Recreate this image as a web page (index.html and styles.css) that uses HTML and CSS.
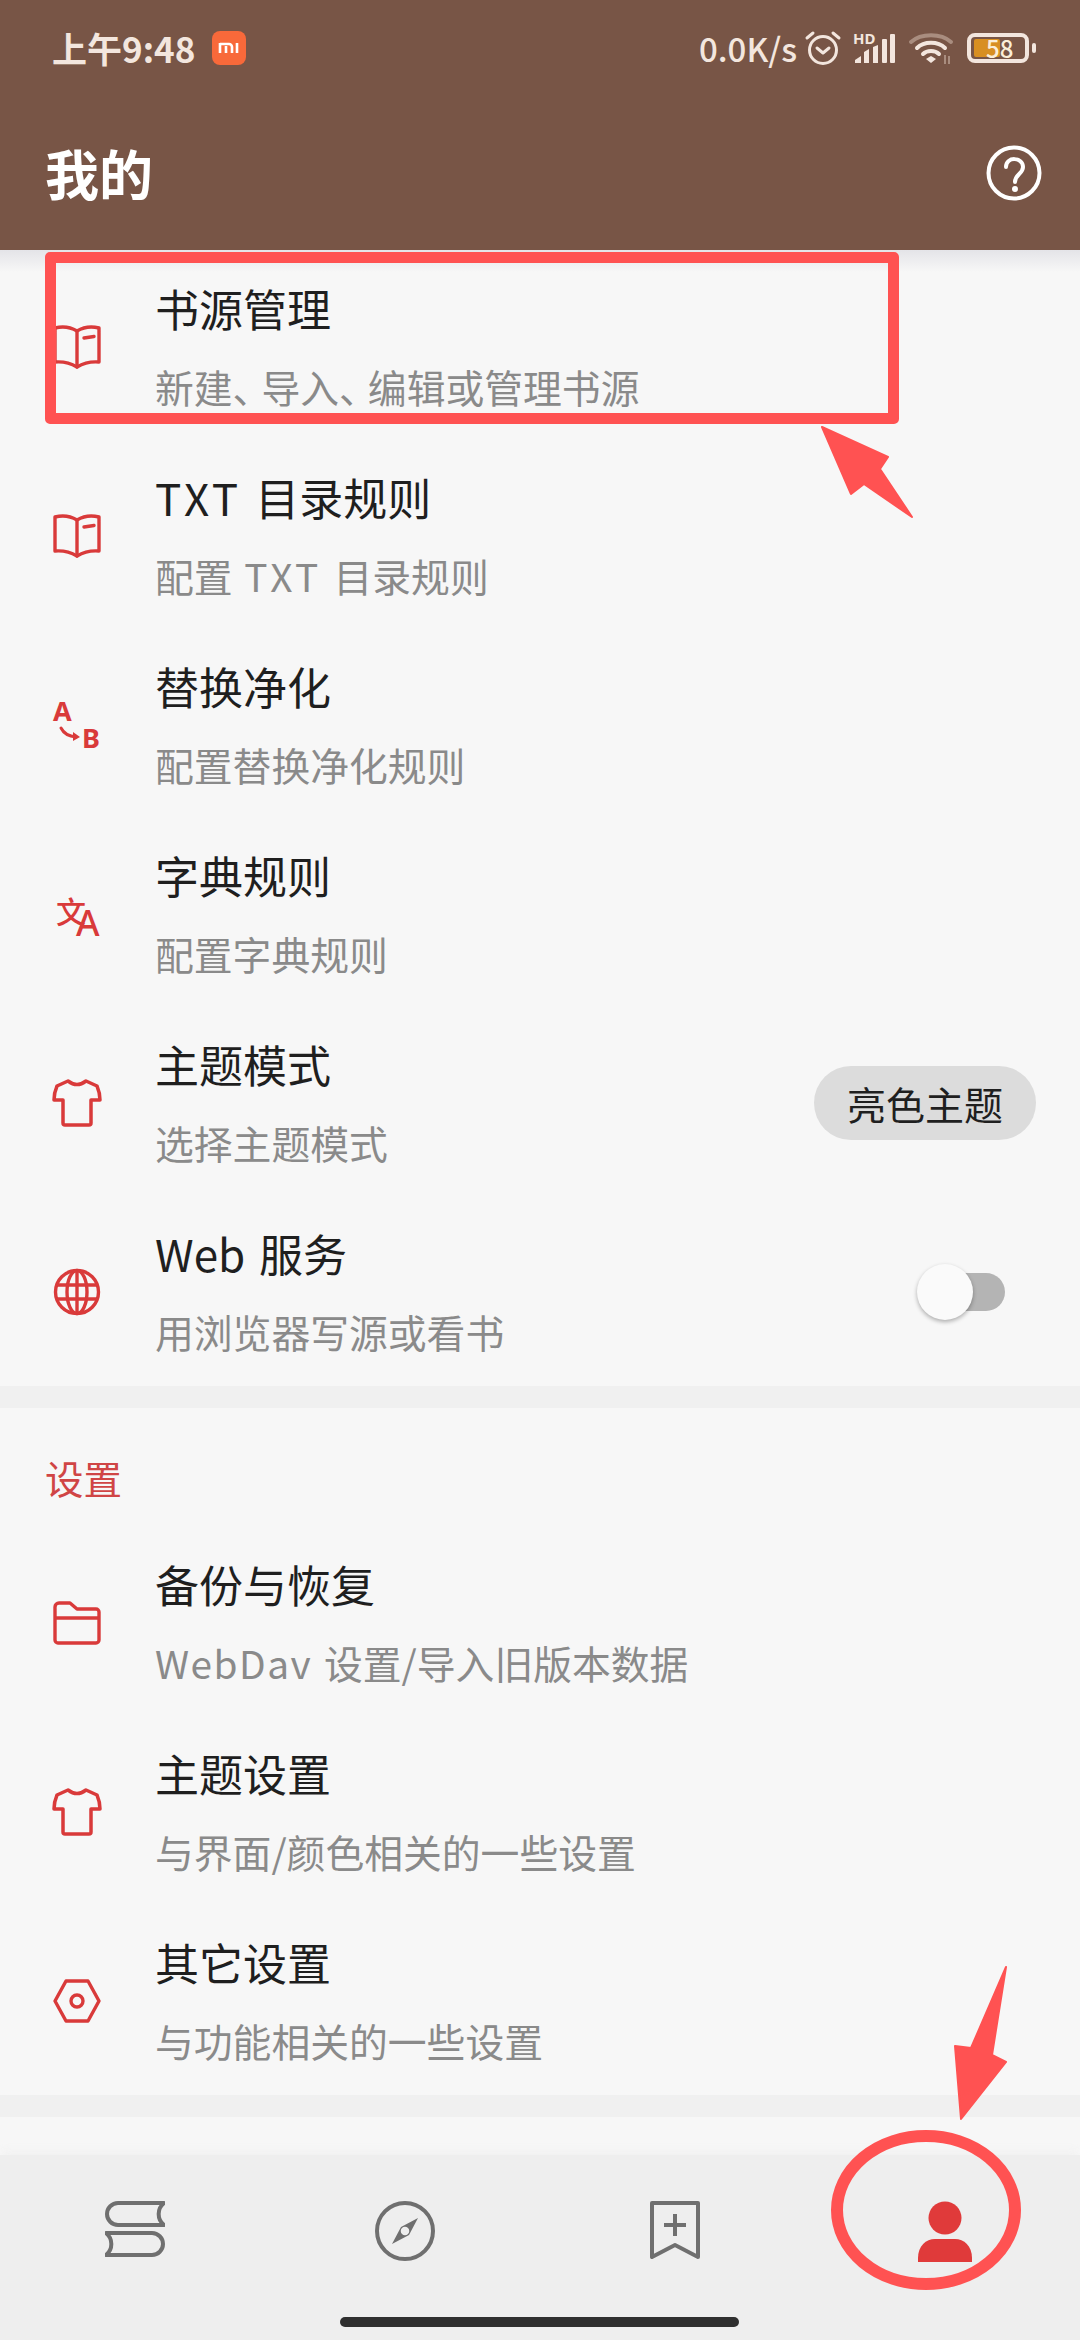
FILE: index.html
```html
<!DOCTYPE html>
<html lang="zh-CN">
<head>
<meta charset="utf-8">
<link rel="stylesheet" href="styles.css">
</head>
<body>
<div class="page">
  <header class="appbar">
    <div class="status">
      <div class="status-left">
        <span class="clock">上午9:48</span>
        <span class="mi">
          <svg viewBox="0 0 34 34" width="34" height="34"><path d="M8 13h9a3 3 0 0 1 3 3v6M8 12v10M14 15v7M25 12v10" fill="none" stroke="#fff" stroke-width="2.600"/></svg>
        </span>
      </div>
      <div class="status-right">
        <span class="speed">0.0K/s</span>
        <svg viewBox="0 0 36 36" width="36" height="36"><g fill="none" stroke="#f3e6de" stroke-width="3" stroke-linecap="round" stroke-linejoin="round"><circle cx="18" cy="20" r="13.500"/><path d="M12 18l6 5 6-5M2 8l6-5M34 8l-6-5"/></g></svg>
        <svg viewBox="0 0 44 32" width="44" height="32"><text x="0" y="12" class="hd">HD</text><g fill="#f3e6de"><path d="M2 31v-3l6-4v7zM11 31V20l5-3v14zM20 31V15l5-2v18z"/><rect x="29" y="7" width="5" height="24" rx="1"/><rect x="37" y="2" width="5" height="29" rx="1"/></g></svg>
        <svg viewBox="0 0 44 34" width="44" height="34"><g fill="none" stroke-linecap="round" stroke-width="4"><path d="M2 11C12 2 32 2 42 11" stroke="#a98d7f"/><path d="M8 17C15 10 29 10 36 17" stroke="#f3e6de"/><path d="M14 23C18 19 26 19 30 23" stroke="#f3e6de"/></g><path d="M17 28l5-3 5 3-5 4z" fill="#f3e6de"/><path d="M36 33V24M40 33V25" stroke="#a98d7f" stroke-width="2" fill="none"/></svg>
        <span class="battery"><span class="battery-fill"></span><span class="battery-num">58</span></span>
      </div>
    </div>
    <div class="toolbar">
      <h1 class="title">我的</h1>
      <svg viewBox="0 0 56 56" width="56" height="56"><circle cx="28" cy="28" r="25.500" fill="none" stroke="#fff" stroke-width="4"/><path d="M20 22c0-11 17-10 17 0 0 7-8 7-8 15" fill="none" stroke="#fff" stroke-width="4" stroke-linecap="round"/><circle cx="29" cy="44" r="3" fill="#fff"/></svg>
    </div>
  </header>

  <main class="content">
    <section class="group">
      <div class="row">
        <svg class="ico" viewBox="0 0 48 48"><use href="#i-book"/></svg>
        <div class="texts"><div class="t">书源管理</div><div class="s">新建<span class="p">、</span>导入<span class="p">、</span>编辑或管理书源</div></div>
      </div>
      <div class="row">
        <svg class="ico" viewBox="0 0 48 48"><use href="#i-book"/></svg>
        <div class="texts"><div class="t"><span class="lat">TXT</span> 目录规则</div><div class="s">配置 <span class="lat">TXT</span> 目录规则</div></div>
      </div>
      <div class="row">
        <svg class="ico" viewBox="0 0 48 48"><text x="0" y="20" class="ab">A<tspan x="29" y="47">B</tspan></text><path d="M8 27Q12 35 23 36" fill="none" stroke="#d93a3a" stroke-width="3" stroke-linecap="round"/><path d="M20 31l7 5-7 4z" fill="#d93a3a"/></svg>
        <div class="texts"><div class="t">替换净化</div><div class="s">配置替换净化规则</div></div>
      </div>
      <div class="row">
        <svg class="ico" viewBox="0 0 48 48"><text x="3" y="33" class="tr1">文<tspan x="23" y="46" class="tr2">A</tspan></text></svg>
        <div class="texts"><div class="t">字典规则</div><div class="s">配置字典规则</div></div>
      </div>
      <div class="row">
        <svg class="ico" viewBox="0 0 48 48"><use href="#i-shirt"/></svg>
        <div class="texts"><div class="t">主题模式</div><div class="s">选择主题模式</div></div>
        <div class="chip">亮色主题</div>
      </div>
      <div class="row">
        <svg class="ico" viewBox="0 0 48 48"><g fill="none" stroke="#d93a3a" stroke-width="3.400"><circle cx="24" cy="24" r="21.500"/><ellipse cx="24" cy="24" rx="10" ry="21.500"/><path d="M3 17h42M3 31h42M24 3v42"/></g></svg>
        <div class="texts"><div class="t">Web 服务</div><div class="s">用浏览器写源或看书</div></div>
        <div class="switch"><span class="thumb"></span></div>
      </div>
    </section>
    <div class="divider"></div>
    <div class="section-head">设置</div>
    <section class="group">
      <div class="row">
        <svg class="ico" viewBox="0 0 48 48"><g fill="none" stroke="#d93a3a" stroke-width="3.400" stroke-linejoin="round"><path d="M2 8a4 4 0 0 1 4-4h11l7 6h19a3 3 0 0 1 3 3v28a3 3 0 0 1-3 3H5a3 3 0 0 1-3-3z"/><path d="M2 19h44"/></g></svg>
        <div class="texts"><div class="t">备份与恢复</div><div class="s"><span class="lat-s">WebDav</span> 设置/导入旧版本数据</div></div>
      </div>
      <div class="row">
        <svg class="ico" viewBox="0 0 48 48"><use href="#i-shirt"/></svg>
        <div class="texts"><div class="t">主题设置</div><div class="s">与界面/颜色相关的一些设置</div></div>
      </div>
      <div class="row">
        <svg class="ico" viewBox="0 0 48 48"><g fill="none" stroke="#d93a3a" stroke-width="3.400" stroke-linejoin="round"><path d="M13 4h22l11 20-11 20H13L2 24z"/><circle cx="24" cy="24" r="6"/></g></svg>
        <div class="texts"><div class="t">其它设置</div><div class="s">与功能相关的一些设置</div></div>
      </div>
    </section>
    <div class="divider"></div>
  </main>

  <nav class="tabs">
    <div class="tab">
      <svg viewBox="0 0 60 56" width="60" height="56"><g fill="none" stroke="#6f6f6f" stroke-width="4" stroke-linejoin="round"><path d="M59 2H13a11 11 0 0 0 0 22h46a14 14 0 0 1 0-22z"/><path d="M1 32h46a11 11 0 0 1 0 22H1a14 14 0 0 0 0-22z"/></g></svg>
    </div>
    <div class="tab">
      <svg viewBox="0 0 60 60" width="60" height="60"><circle cx="30" cy="30" r="28" fill="none" stroke="#6f6f6f" stroke-width="4"/><path d="M43 17L34 34 17 43 26 26zM33 27a4 4 0 1 0-6 6 4 4 0 1 0 6-6z" fill="#6f6f6f" fill-rule="evenodd"/></svg>
    </div>
    <div class="tab">
      <svg viewBox="0 0 50 58" width="50" height="58"><path d="M2 2h46v54L25 44 2 56z" fill="none" stroke="#6f6f6f" stroke-width="4" stroke-linejoin="round"/><path d="M25 13v22M14 24h22" fill="none" stroke="#6f6f6f" stroke-width="4"/></svg>
    </div>
    <div class="tab">
      <svg viewBox="0 0 56 62" width="56" height="62"><circle cx="28" cy="17" r="16.500" fill="#e03a3a"/><path d="M1 61v-4c0-12 8-19 17-19h20c9 0 17 7 17 19v4z" fill="#e03a3a"/></svg>
    </div>
    <div class="home-bar"></div>
  </nav>

  <div class="mark-rect"></div>
  <svg class="marks" viewBox="0 0 1080 2340" width="1080" height="2340">
    <path d="M822 427L888 457 880 469 912 517 864 484 851 494z" fill="#ff5252" stroke="#ff5252" stroke-width="2" stroke-linejoin="round"/>
    <path d="M1006 1967L992 2055 1006 2062 961 2119 955 2046 971 2048z" fill="#ff5252" stroke="#ff5252" stroke-width="2" stroke-linejoin="round"/>
    <ellipse cx="926" cy="2210" rx="89" ry="74" fill="none" stroke="#ff5252" stroke-width="12"/>
  </svg>
</div>

<svg class="defs" width="0" height="0">
  <defs>
    <g id="i-book" fill="none" stroke="#d93a3a" stroke-width="3.400" stroke-linejoin="round" stroke-linecap="round">
      <path d="M2 5Q14 2 24 8 34 2 46 5V39Q34 38 24 44 14 38 2 39z"/>
      <path d="M24 8V44M31 15l10-1.500"/>
    </g>
    <g id="i-shirt" fill="none" stroke="#d93a3a" stroke-width="3.500" stroke-linejoin="round">
      <path d="M15 2Q24 9 33 2L44 7Q47 14 47 21H38V44a2 2 0 0 1-2 2H12a2 2 0 0 1-2-2V21H1Q1 14 4 7z"/>
    </g>
  </defs>
</svg>
</body>
</html>
```
FILE: styles.css
```css
* { box-sizing: border-box; }
html, body { margin: 0; padding: 0; }
body { font-family: "Noto Sans CJK SC", "Noto Sans", sans-serif; background: #f7f7f7; }
.page { position: relative; width: 1080px; height: 2340px; overflow: hidden; display: flex; flex-direction: column; background: #f7f7f7; }
.defs { position: absolute; }

.appbar { height: 250px; flex: none; background: #785546; color: #fff; display: flex; flex-direction: column; }
.status { height: 96px; padding: 0 44px 0 52px; display: flex; align-items: center; justify-content: space-between; color: #f3e6de; }
.status-left { display: flex; align-items: center; gap: 17px; }
.clock { font-size: 35px; font-weight: 700; line-height: 40px; }
.mi { width: 34px; height: 34px; background: #f8693a; border-radius: 8px; display: block; }
.mi svg { display: block; }
.status-right { display: flex; align-items: center; gap: 12px; }
.status-right svg { overflow: visible; }
.speed { font-size: 33px; font-weight: 500; line-height: 40px; margin-right: -4px; }
.hd { font: 700 15px "Noto Sans", sans-serif; fill: #f3e6de; }
.battery { position: relative; width: 62px; height: 30px; border: 4px solid #f3e6de; border-radius: 8px; margin: 0 7px 0 2px; display: block; }
.battery::after { content: ""; position: absolute; right: -11px; top: 6px; width: 4px; height: 10px; background: #f3e6de; border-radius: 2px; }
.battery-fill { position: absolute; left: 3px; top: 2px; bottom: 2px; width: 26px; background: #d88f22; border-radius: 2px; }
.battery-num { position: absolute; left: 15px; top: 0; font-size: 24px; line-height: 22px; font-weight: 500; color: #fbeed8; }
.toolbar { height: 154px; padding: 0 38px 0 45px; display: flex; align-items: center; justify-content: space-between; }
.title { margin: 0; font-size: 54px; font-weight: 700; line-height: 70px; color: #fff; }

.content { flex: 1; background: linear-gradient(#e4e4e8, #f7f7f7 22px); padding-top: 2px; }
.row { height: 189px; display: flex; align-items: center; padding: 0 44px 0 53px; }
.ico { width: 48px; height: 48px; flex: none; overflow: visible; }
.texts { flex: 1; margin-left: 54px; padding-bottom: 3px; display: flex; flex-direction: column; gap: 22px; }
.t { font-size: 44px; line-height: 60px; color: #1f1f1f; word-spacing: 4px; }
.s { font-size: 38.8px; line-height: 52px; color: #8a8a8a; word-spacing: 3px; }
.p { letter-spacing: -10px; }
.lat { letter-spacing: 3.5px; }
.lat-s { letter-spacing: 1.5px; }
.divider { height: 22px; background: #f0f0f0; }
.section-head { height: 120px; padding: 18px 45px 0; display: flex; align-items: center; font-size: 38.5px; color: #d04545; }
.ab { font: 700 27px "Noto Sans", sans-serif; fill: #d93a3a; }
.tr1 { font: 500 30px "Noto Sans CJK SC", sans-serif; fill: #d93a3a; }
.tr2 { font: 500 36px "Noto Sans", sans-serif; fill: #d93a3a; }
.chip { width: 222px; height: 74px; border-radius: 37px; background: #dcdcdc; font-size: 39px; line-height: 74px; text-align: center; color: #1f1f1f; }
.switch { position: relative; width: 62px; height: 38px; margin-right: 31px; background: #b4b4b4; border-radius: 0 19px 19px 0; }
.thumb { position: absolute; left: -26px; top: -9px; width: 56px; height: 56px; border-radius: 50%; background: #fafafa; box-shadow: 0 2px 4px rgba(0,0,0,.3); }

.tabs { position: relative; height: 185px; flex: none; display: flex; align-items: flex-start; background: #eeeeee; box-shadow: 0 -6px 8px -2px rgba(240,240,240,.8); }
.tab { flex: 1; height: 150px; padding-top: 46px; display: flex; justify-content: center; align-items: flex-start; }
.home-bar { position: absolute; left: 340px; bottom: 13px; width: 399px; height: 10px; background: #2f2f2f; border-radius: 5px; }

.mark-rect { position: absolute; left: 45px; top: 252px; width: 854px; height: 172px; border: 11px solid #ff5252; border-radius: 5px; }
.marks { position: absolute; left: 0; top: 0; pointer-events: none; }
```
